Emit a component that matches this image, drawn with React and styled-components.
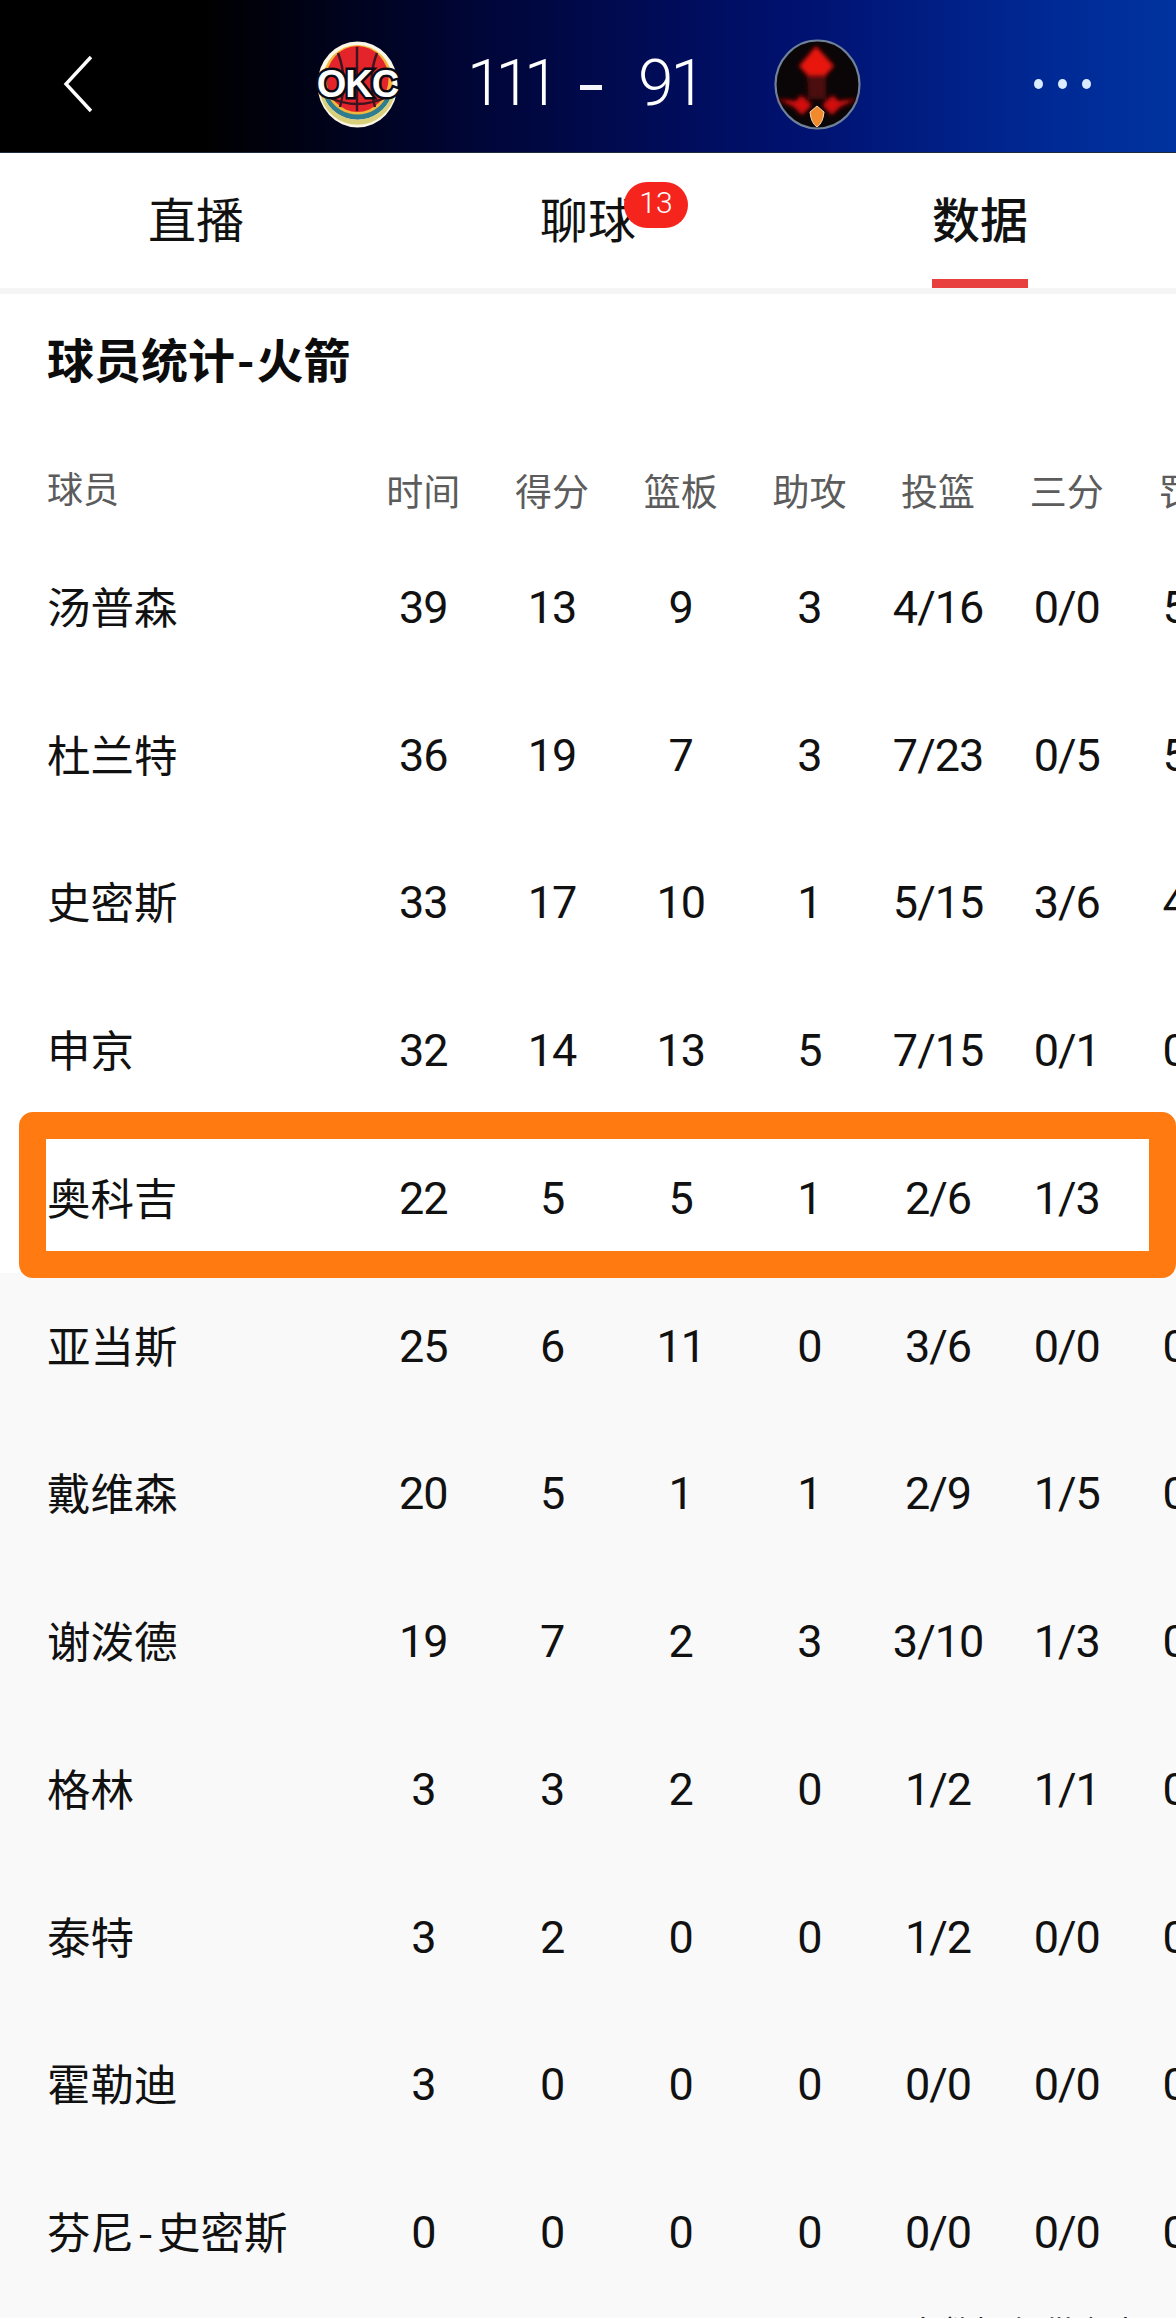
import React from "react";
import styled, { createGlobalStyle } from "styled-components";

const GlobalStyle = createGlobalStyle`
  html, body {
    margin: 0;
    padding: 0;
    background: #f9f9f9;
  }
  body {
    font-family: Roboto, "Noto Sans CJK SC", sans-serif;
    color: #111;
  }
`;

const Page = styled.div`
  width: 1176px;
  height: 2318px;
  overflow: hidden;
  background: #f9f9f9;
`;

const Header = styled.header`
  height: 153px;
  box-sizing: border-box;
  padding-top: 16px;
  display: flex;
  align-items: center;
  background: linear-gradient(90deg, #000 0%, #000 17%, #00063a 42%, #001170 68%, #002a96 90%, #00339f 100%);
  border-bottom: 1px solid #1d2a44;
`;

const BackButton = styled.button`
  width: 32px;
  height: 60px;
  margin-left: 62px;
  margin-right: 222px;
  padding: 0;
  border: 0;
  background: none;
  display: block;
`;

const TeamLogo = styled.svg`
  display: block;
  flex: none;
`;

const Score = styled.div`
  width: 236px;
  margin: 0 ${(p) => p.$right}px 0 68px;
  display: flex;
  justify-content: space-between;
  align-items: center;
  color: #fff;
  font-family: Roboto, sans-serif;
  font-weight: 300;
  font-size: 64px;
  line-height: 1;
`;

const ScoreNumber = styled.span`
  letter-spacing: ${(p) => p.$tight}px;
`;

const ScoreDash = styled.i`
  width: 22px;
  height: 5px;
  margin: 6px 8px 0 0;
  background: #f4f6fb;
`;

const Dots = styled.div`
  margin-left: 173px;
  display: flex;
  gap: 15px;
`;

const Dot = styled.i`
  width: 9px;
  height: 10px;
  border-radius: 50%;
  background: #dcecff;
`;

const Tabs = styled.nav`
  height: 135px;
  display: grid;
  grid-template-columns: repeat(3, 1fr);
  background: #fff;
`;

const Tab = styled.div`
  position: relative;
  display: flex;
  justify-content: center;
  align-items: flex-start;
  padding-top: 30px;
  font-family: "Noto Sans CJK SC", sans-serif;
  font-size: 48px;
  line-height: 68px;
  color: #111;
  font-weight: ${(p) => (p.$active ? 500 : 400)};
`;

const TabLabel = styled.span`
  position: relative;
  height: 105px;
  &::after {
    content: "";
    display: ${(p) => (p.$active ? "block" : "none")};
    position: absolute;
    left: 0;
    right: 0;
    bottom: 0;
    height: 9px;
    background: #e8403f;
  }
`;

const Badge = styled.span`
  position: absolute;
  left: 84px;
  top: -1px;
  width: 64px;
  height: 46px;
  border-radius: 23px;
  background: #f5251d;
  color: #fff;
  font-family: Roboto, sans-serif;
  font-size: 30px;
  font-weight: 300;
  line-height: 42px;
  text-align: center;
`;

const Divider = styled.div`
  height: 6px;
  background: #f5f5f5;
`;

const Title = styled.h2`
  margin: 0;
  padding: 34px 0 58px 47px;
  background: #fff;
  font-family: "Noto Sans CJK SC", sans-serif;
  font-size: 47px;
  font-weight: 700;
  line-height: 60px;
  color: #0c0c0c;
`;

const Hyphen = styled.span`
  margin: 0 ${(p) => p.$gap}px;
`;

const Row = styled.div`
  position: relative;
  display: grid;
  grid-template-columns: 312px repeat(7, 128.7px);
  align-items: center;
  padding-left: 47px;
  width: 1400px;
  height: ${(p) => (p.$head ? "88px" : "147.75px")};
  background: ${(p) => (p.$muted ? "#f9f9f9" : "#fff")};
  color: ${(p) => (p.$head ? "#5c5c5c" : "#111")};
  font-size: ${(p) => (p.$head ? "37px" : "45px")};
  ${(p) =>
    p.$highlight &&
    `
    z-index: 1;
    &::before {
      content: "";
      position: absolute;
      left: 19px;
      top: -13px;
      width: 1157px;
      height: 166px;
      box-sizing: border-box;
      border: 27px solid #ff7a10;
      border-radius: 14px;
      background: #fff;
    }
  `}
`;

const Name = styled.div`
  position: relative;
  top: -2px;
  font-family: "Noto Sans CJK SC", sans-serif;
  font-size: ${(p) => (p.$head ? "36px" : "43.5px")};
  line-height: 1.2;
`;

const Cell = styled.div`
  position: relative;
  text-align: center;
  line-height: 1.2;
  font-family: ${(p) => (p.$head ? '"Noto Sans CJK SC", sans-serif' : 'Roboto, "Noto Sans CJK SC", sans-serif')};
  letter-spacing: ${(p) => (p.$head ? "0" : "-1px")};
`;

const Footnote = styled.div`
  padding: 1px 32px 0 0;
  text-align: right;
  font-family: "Noto Sans CJK SC", sans-serif;
  font-size: 34px;
  line-height: 48px;
  color: #222;
`;

const heads = ["时间", "得分", "篮板", "助攻", "投篮", "三分", "罚球"];

const players = [
  ["汤普森", "39", "13", "9", "3", "4/16", "0/0", "5/6"],
  ["杜兰特", "36", "19", "7", "3", "7/23", "0/5", "5/5"],
  ["史密斯", "33", "17", "10", "1", "5/15", "3/6", "4/4"],
  ["申京", "32", "14", "13", "5", "7/15", "0/1", "0/0"],
  ["奥科吉", "22", "5", "5", "1", "2/6", "1/3", ""],
  ["亚当斯", "25", "6", "11", "0", "3/6", "0/0", "0/0"],
  ["戴维森", "20", "5", "1", "1", "2/9", "1/5", "0/0"],
  ["谢泼德", "19", "7", "2", "3", "3/10", "1/3", "0/0"],
  ["格林", "3", "3", "2", "0", "1/2", "1/1", "0/0"],
  ["泰特", "3", "2", "0", "0", "1/2", "0/0", "0/0"],
  ["霍勒迪", "3", "0", "0", "0", "0/0", "0/0", "0/0"],
  ["芬尼-史密斯", "0", "0", "0", "0", "0/0", "0/0", "0/0"],
];

// the hyphen in the screenshot's font sits wider than the one in Noto CJK
const spaceHyphen = (text, gap) => {
  const parts = text.split("-");
  if (parts.length < 2) return text;
  return (
    <>
      {parts[0]}
      <Hyphen $gap={gap}>-</Hyphen>
      {parts[1]}
    </>
  );
};

const OkcLogo = () => (
  <TeamLogo width="83" height="87" viewBox="0 0 83 87">
    <ellipse cx="41.5" cy="43.5" rx="40" ry="43" fill="#fbf6e6" />
    <ellipse cx="41.5" cy="41" rx="35" ry="37" fill="#f2b63a" />
    <path d="M8 56 A36 36 0 0 0 75 56 L70 56 A31 29 0 0 1 13 56 Z" fill="#2f7d8f" />
    <path d="M4 52 A38 38 0 0 0 79 52 L75 56 A36 36 0 0 1 8 56 Z" fill="#d9cf7a" />
    <ellipse cx="41.5" cy="38" rx="31" ry="33" fill="#e3242b" />
    <path d="M41 6 V70 M22 12 Q32 38 24 66 M61 12 Q51 38 59 66 M12 56 Q41 70 71 56" stroke="#3b1420" strokeWidth="2.4" fill="none" />
    <text
      x="41.5"
      y="56"
      textAnchor="middle"
      fontFamily="Liberation Sans, sans-serif"
      fontWeight="700"
      fontSize="38"
      letterSpacing="-1"
      fill="#fff"
      stroke="#0a0a14"
      strokeWidth="5"
      paintOrder="stroke"
    >
      OKC
    </text>
  </TeamLogo>
);

const RocketLogo = () => (
  <TeamLogo width="87" height="91" viewBox="0 0 87 91">
    <defs>
      <filter id="soft">
        <feGaussianBlur stdDeviation="2" />
      </filter>
    </defs>
    <ellipse cx="43.5" cy="45.5" rx="42" ry="44" fill="#0a0506" stroke="#6f8299" strokeWidth="2.2" />
    <g filter="url(#soft)">
      <path d="M42 7 L60 27 L52 36 H33 L25 27 Z" fill="#e8120f" />
      <path d="M33 36 H52 L52 60 H34 Z" fill="#4c0a0b" />
      <path d="M3 60 L22 62 L27 56 L38 66 L28 76 L20 68 Z" fill="#d40f0e" />
      <path d="M83 60 L64 62 L59 56 L48 66 L58 76 L66 68 Z" fill="#d40f0e" />
    </g>
    <path d="M43 67 L50 73 Q49 84 43 88 Q37 84 36 73 Z" fill="#f08a2c" stroke="#f6d9b0" strokeWidth="1" />
  </TeamLogo>
);

const App = () => (
  <Page>
    <GlobalStyle />
    <Header>
      <BackButton aria-label="返回">
        <svg width="32" height="60" viewBox="0 0 32 60" fill="none">
          <path d="M29 3 L4 30 L29 57" stroke="#fff" strokeWidth="3.4" strokeLinejoin="miter" />
        </svg>
      </BackButton>
      <OkcLogo />
      <Score $right={71}>
        <ScoreNumber $tight={-7}>111</ScoreNumber>
        <ScoreDash />
        <ScoreNumber $tight={-3}>91</ScoreNumber>
      </Score>
      <RocketLogo />
      <Dots>
        <Dot />
        <Dot />
        <Dot />
      </Dots>
    </Header>
    <Tabs>
      <Tab>
        <TabLabel>直播</TabLabel>
      </Tab>
      <Tab>
        <TabLabel>
          聊球
          <Badge>13</Badge>
        </TabLabel>
      </Tab>
      <Tab $active>
        <TabLabel $active>数据</TabLabel>
      </Tab>
    </Tabs>
    <Divider />
    <Title>{spaceHyphen("球员统计-火箭", 2)}</Title>
    <Row $head>
      <Name $head>球员</Name>
      {heads.map((h) => (
        <Cell key={h} $head>
          {h}
        </Cell>
      ))}
    </Row>
    {players.map(([name, ...stats], i) => (
      <Row key={name} $muted={i > 4} $highlight={i === 4}>
        <Name>{spaceHyphen(name, 4)}</Name>
        {stats.map((s, j) => (
          <Cell key={j}>{s}</Cell>
        ))}
      </Row>
    ))}
    <Footnote>本数据仅供参考</Footnote>
  </Page>
);

export default App;
